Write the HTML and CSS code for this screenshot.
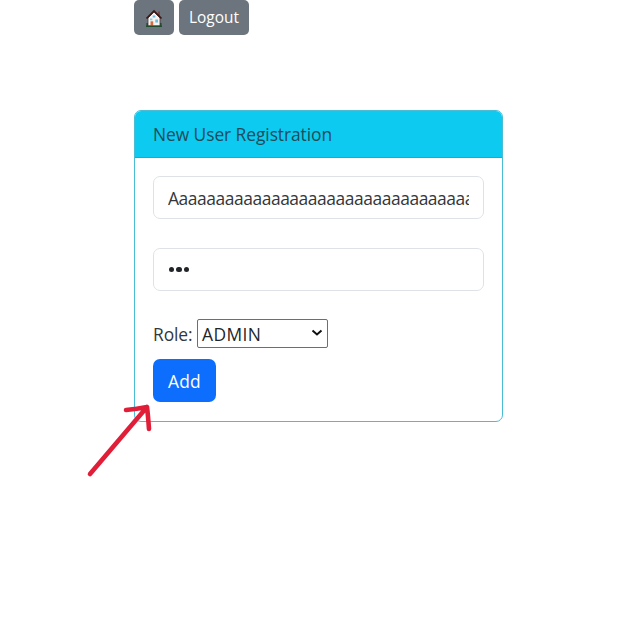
FILE: index.html
```html
<!DOCTYPE html>
<html lang="en">
<head>
<meta charset="utf-8">
<title>New User Registration</title>
<link rel="stylesheet" href="styles.css">
</head>
<body>
<main class="container">
  <nav class="toolbar">
    <a class="btn btn-home" aria-label="Home">
      <svg width="18" height="19" viewBox="0 0 18 19">
        <path d="M3 9v8h12V9L9 3z" fill="#f8f3f0" stroke="#443b3c" stroke-width=".8"/>
        <path d="M13 2.500h2v5l-2-2z" fill="#7c4442"/>
        <path d="M1.500 9.500 9 2l7.500 7.500" fill="none" stroke="#3b1715" stroke-width="1.700"/>
        <path d="M7.700 6.500h2.600v2H7.700zM10.300 10.500h2.700v3h-2.700z" fill="#67bfe2"/>
        <path d="M5 9.500h2.400v1.800H5z" fill="#8bcbe0"/>
        <path d="M5.500 12.300h2.700v4.500H5.500z" fill="#d56b45"/>
        <path d="M1 17.300h16M2.200 14v3M15.800 14v3" stroke="#204b2c" stroke-width="1.500"/>
      </svg>
    </a>
    <a class="btn">Logout</a>
  </nav>
  <section class="card">
    <header class="card-header">New User Registration</header>
    <form class="card-body">
      <div class="control">Aaaaaaaaaaaaaaaaaaaaaaaaaaaaaaaaaa</div>
      <div class="control password"><i></i><i></i><i></i></div>
      <div class="role">
        <span>Role:</span>
        <div class="select">
          <span>ADMIN</span>
          <svg width="12" height="8" viewBox="0 0 12 8"><path d="M1.500 1.500 6 5.500l4.500-4" fill="none" stroke="#111" stroke-width="2"/></svg>
        </div>
      </div>
      <button class="submit" type="button">Add</button>
    </form>
  </section>
</main>
<svg class="arrow" width="70" height="80" viewBox="0 0 70 80">
  <path d="M5 74 62 7M41 10Q52 9 62 7Q63 15 64 29" fill="none" stroke="#e01e37" stroke-width="4.600" stroke-linecap="round" stroke-linejoin="round"/>
</svg>
</body>
</html>
```
FILE: styles.css
```css
* { box-sizing: border-box; }
body {
  margin: 0;
  background: #fff;
  color: #33373b;
  font-family: "Open Sans", "Noto Sans", sans-serif;
  font-size: 17.4px;
  letter-spacing: -0.43px;
}
.container { width: 369px; margin-left: 134px; }
.toolbar { display: flex; gap: 5px; height: 35px; }
.btn {
  display: flex;
  align-items: center;
  justify-content: center;
  width: 70px;
  border-radius: 5px;
  background: #6c757d;
  color: #fff;
  font-size: 15.4px;
  letter-spacing: 0;
}
.btn-home { width: 40px; padding-top: 2px; }
.card {
  height: 312px;
  margin-top: 75px;
  border: 1px solid #4abdd6;
  border-radius: 7px;
  overflow: hidden;
}
.card-header {
  height: 47px;
  padding-left: 18px;
  border-bottom: 1px solid #20a9c9;
  background: #0dcaf0;
  color: #204c5a;
  line-height: 46px;
  letter-spacing: -0.07px;
}
.card-body { display: flex; flex-direction: column; padding: 18px; }
.control {
  height: 43px;
  margin-bottom: 29px;
  padding: 0 14px;
  border: 1px solid #dee2e6;
  border-radius: 7px;
  line-height: 42px;
  white-space: nowrap;
  overflow: clip;
  overflow-clip-margin: content-box;
}
.password { display: flex; align-items: center; gap: 2px; margin-bottom: 28px; padding-left: 15px; }
.password i { width: 5.3px; height: 5.3px; border-radius: 50%; background: #212529; }
.role { display: flex; align-items: center; height: 29px; gap: 5px; }
.role > span { width: 39px; letter-spacing: -0.1px; }
.select {
  display: flex;
  align-items: center;
  justify-content: space-between;
  width: 131px;
  height: 29px;
  padding: 0 4px;
  border: 1px solid #6e6e6e;
  border-radius: 2px;
  color: #212529;
  letter-spacing: 0.4px;
}
.select svg { margin-top: -2px; }
.submit {
  width: 63px;
  height: 43px;
  margin: 11px 0 0;
  padding: 1px 0 0;
  border: 0;
  border-radius: 7px;
  background: #0d6efd;
  color: #fff;
  font: inherit;
  letter-spacing: 0.2px;
}
.arrow { position: absolute; left: 85px; top: 400px; }
```
